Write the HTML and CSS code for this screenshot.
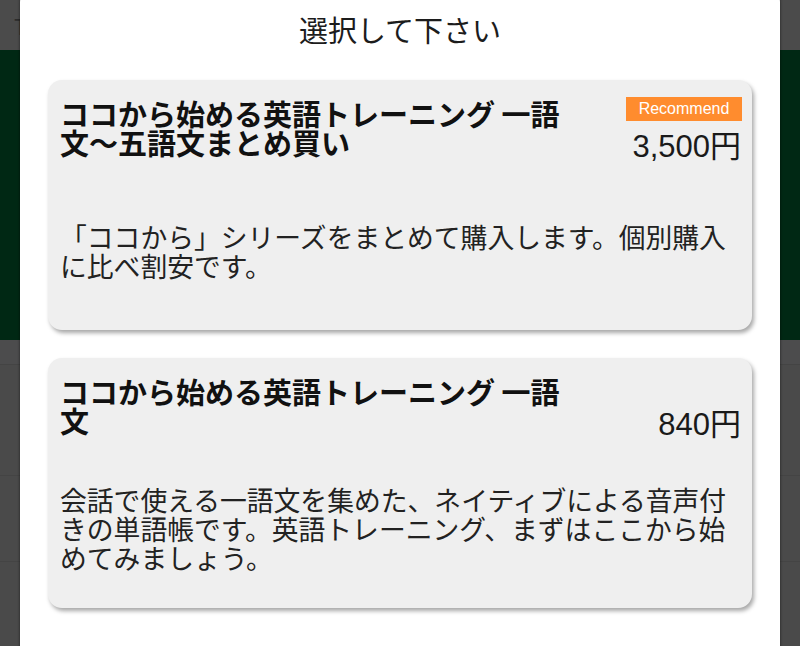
FILE: index.html
```
<!DOCTYPE html>
<html>
<head>
<title>選択して下さい</title>
<link rel="stylesheet" href="styles.css">
</head>
<body>
  <div class="page">
    <div class="topbar"><span class="topbar-link">Top</span></div>
    <div class="hero"></div>
    <div class="row row-short"></div>
    <div class="row"></div>
    <div class="row row-mid"></div>
    <div class="row"></div>
  </div>

  <div class="modal">
    <h1 class="modal-title">選択して下さい</h1>

    <div class="card">
      <div class="card-head">
        <h2 class="card-title">ココから始める英語トレーニング 一語文〜五語文まとめ買い</h2>
        <div class="card-side">
          <span class="badge">Recommend</span>
          <span class="price">3,500円</span>
        </div>
      </div>
      <div class="card-body">
        <p class="card-desc">「ココから」シリーズをまとめて購入します。個別購入に比べ割安です。</p>
      </div>
    </div>

    <div class="card">
      <div class="card-head">
        <h2 class="card-title">ココから始める英語トレーニング 一語文</h2>
        <div class="card-side">
          <span class="badge-space"></span>
          <span class="price">840円</span>
        </div>
      </div>
      <div class="card-body">
        <p class="card-desc">会話で使える一語文を集めた、ネイティブによる音声付きの単語帳です。英語トレーニング、まずはここから始めてみましょう。</p>
      </div>
    </div>
  </div>
</body>
</html>
```

FILE: styles.css
```
html, body {
  margin: 0;
  height: 100%;
  overflow: hidden;
}

body {
  font-family: "Noto Sans CJK JP", "Noto Sans", sans-serif;
  background-color: #4a4a4a;
  position: relative;
}

/* page behind the dialog */
.topbar {
  height: 50px;
  background-color: #4b4b4b;
  display: flex;
  align-items: center;
  padding-left: 14px;
}

.topbar-link {
  color: #2c2c2c;
  font-size: 22px;
}

.hero {
  height: 290px;
  background-color: #002814;
}

.row {
  height: 110px;
  border-bottom: 1px solid #444;
}

.row-short {
  height: 24px;
  background-color: #4c4c4d;
}

.row-mid {
  height: 85px;
}

/* dialog */
.modal {
  position: absolute;
  top: -12px;
  left: 20px;
  right: 20px;
  bottom: -30px;
  background-color: #fff;
  border-radius: 14px;
  box-shadow: 0 0 3px rgba(0, 0, 0, 0.6);
  padding: 21px 28px 0;
}

.modal-title {
  margin: 0 0 31px;
  font-size: 29px;
  font-weight: normal;
  line-height: 40px;
  text-align: center;
  color: #1c1c1c;
}

.card {
  height: 250px;
  margin-bottom: 28px;
  background-color: #efefef;
  border-radius: 14px;
  box-shadow: 2px 3px 4px rgba(0, 0, 0, 0.35);
  display: flex;
  flex-direction: column;
  padding: 0 10px 0 12px;
}

.card-head {
  display: flex;
  justify-content: space-between;
  align-items: flex-start;
}

.card-title {
  margin: 19px 0 0;
  width: 515px;
  font-size: 29px;
  line-height: 29px;
  font-weight: bold;
  color: #111;
}

.card-side {
  display: flex;
  flex-direction: column;
  align-items: flex-end;
  padding-top: 17px;
}

.badge {
  width: 116px;
  height: 24px;
  line-height: 24px;
  background-color: #ff8c2e;
  color: #fff;
  font-family: "Liberation Sans", Arial, sans-serif;
  font-size: 16px;
  text-align: center;
}

.badge-space {
  height: 24px;
}

.price {
  margin-top: 7px;
  margin-right: 1px;
  font-family: "Liberation Sans", "Noto Sans CJK JP", sans-serif;
  font-size: 31px;
  line-height: 38px;
  color: #1a1a1a;
}

.card-body {
  flex: 1;
  display: flex;
  align-items: center;
  padding-top: 5px;
}

.card-desc {
  margin: 0;
  font-size: 26.8px;
  line-height: 29px;
  color: #222;
}
```
